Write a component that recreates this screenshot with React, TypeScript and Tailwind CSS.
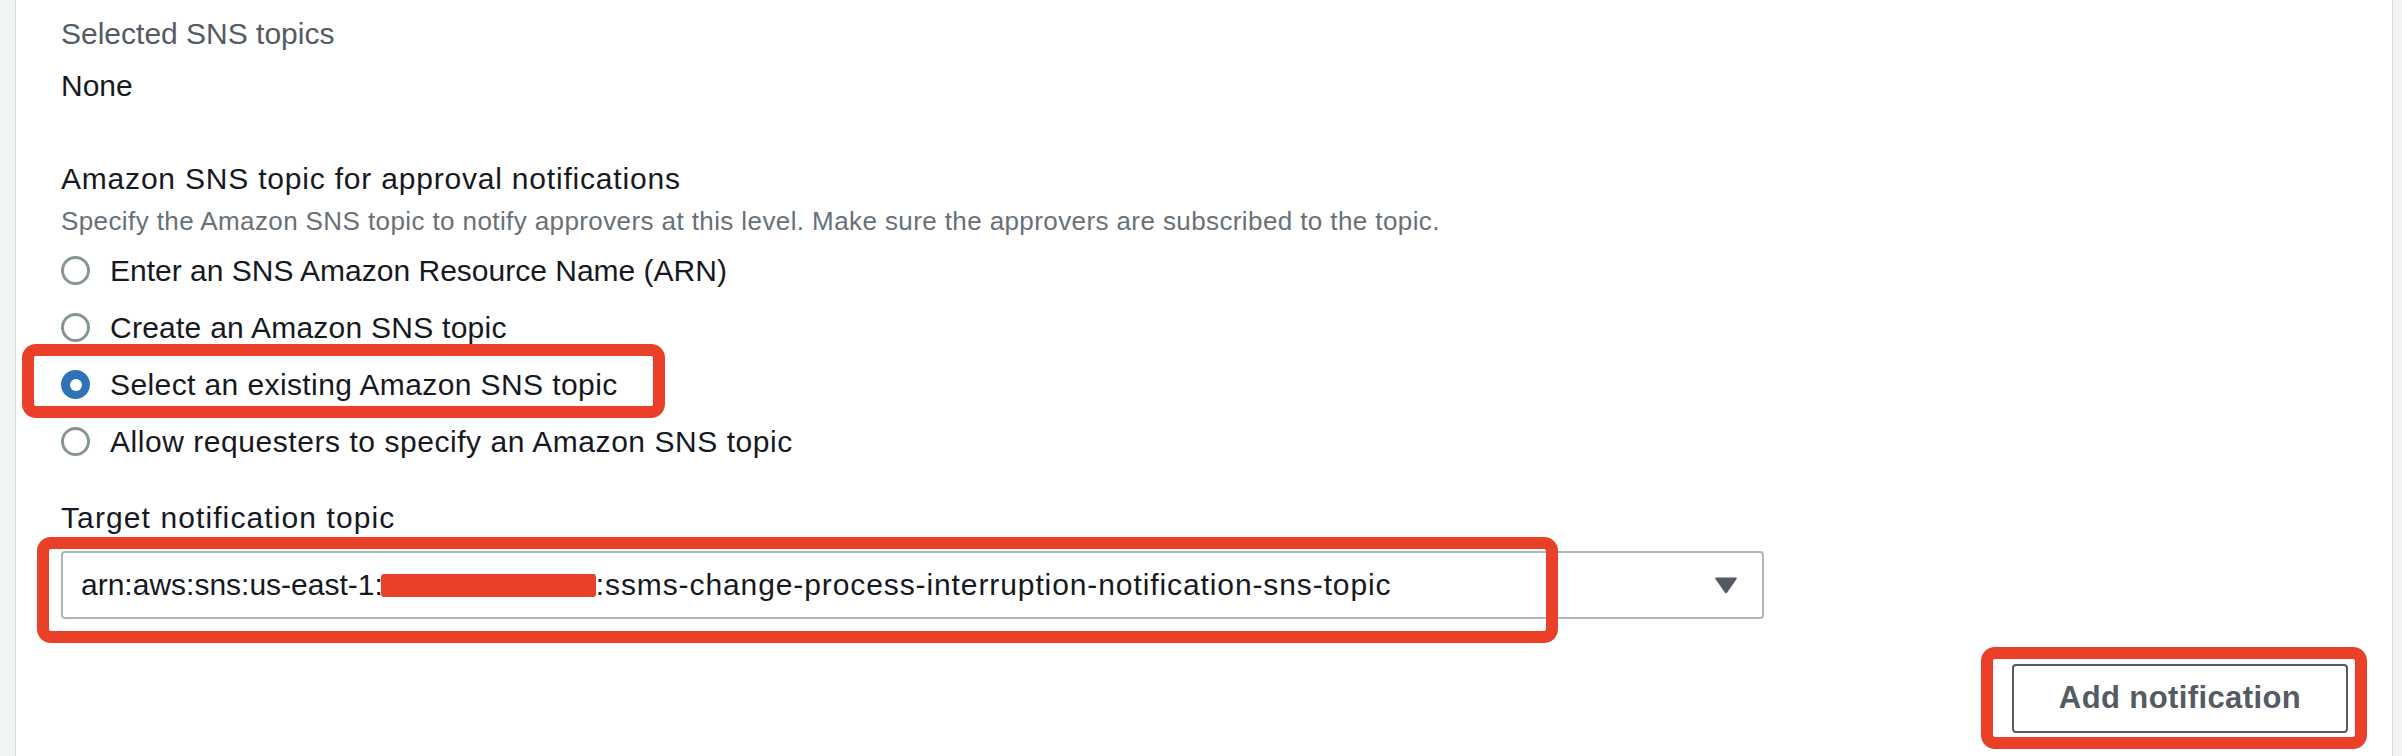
import { ReactNode } from 'react';

// label + tracking tweak so the Liberation widths line up with the original font
const options = [
  { label: 'Enter an SNS Amazon Resource Name (ARN)', track: 'tracking-[0px]' },
  { label: 'Create an Amazon SNS topic', track: 'tracking-[0.25px]' },
  { label: 'Select an existing Amazon SNS topic', track: 'tracking-[0.4px]' },
  { label: 'Allow requesters to specify an Amazon SNS topic', track: 'tracking-[0.55px]' },
];

function Highlight({ className }: { className: string }) {
  return (
    <span
      className={`pointer-events-none absolute rounded-[14px] border-[12px] border-[#ea4029] ${className}`}
    />
  );
}

function Radio({ checked }: { checked: boolean }) {
  if (checked) {
    return (
      <span className="flex h-[29px] w-[29px] shrink-0 items-center justify-center rounded-full bg-[#2e73b8]">
        <span className="h-[12px] w-[12px] rounded-full bg-white" />
      </span>
    );
  }
  return <span className="h-[29px] w-[29px] shrink-0 rounded-full border-[3px] border-[#879596] bg-white" />;
}

function Row({
  label,
  track,
  checked,
  children,
}: {
  label: string;
  track: string;
  checked: boolean;
  children?: ReactNode;
}) {
  return (
    <div className="relative flex h-[57px] items-center gap-[20px]">
      <Radio checked={checked} />
      <span className={`text-[30px] leading-[40px] text-[#16191f] ${track}`}>{label}</span>
      {children}
    </div>
  );
}

export default function App() {
  const selected = 2;

  return (
    <div
      className="flex h-[756px] w-full bg-[#f2f3f3]"
      style={{ fontFamily: '"Liberation Sans", Arial, sans-serif' }}
    >
      <div className="ml-[15px] mr-[9px] flex flex-1 flex-col border-x border-[#d5dbdb] bg-white pl-[45px] pr-[44px] pt-[14px]">
        <div className="text-[30px] leading-[40px] text-[#545b64]">Selected SNS topics</div>
        <div className="mt-[12px] text-[30px] leading-[40px] text-[#16191f]">None</div>

        <div className="mt-[53px] text-[30px] leading-[40px] tracking-[0.8px] text-[#16191f]">
          Amazon SNS topic for approval notifications
        </div>
        <div className="mt-[4px] text-[26px] leading-[36px] tracking-[0.4px] text-[#687078]">
          Specify the Amazon SNS topic to notify approvers at this level. Make sure the approvers are
          subscribed to the topic.
        </div>

        <div className="mt-[3px] flex flex-col">
          {options.map((o, i) => (
            <Row key={o.label} label={o.label} track={o.track} checked={i === selected}>
              {i === selected && <Highlight className="left-[-39px] top-[-12px] bottom-[-5px] w-[643px]" />}
            </Row>
          ))}
        </div>

        <div className="mt-[28px] text-[30px] leading-[40px] tracking-[1.1px] text-[#16191f]">
          Target notification topic
        </div>
        <div className="relative mt-[13px] w-[1703px]">
          <div className="flex h-[68px] items-center justify-between rounded-[4px] border-2 border-[#aab7b8] bg-white pl-[18px] pr-[24px]">
            <span className="whitespace-nowrap text-[30px] leading-[40px] text-[#16191f]">
              arn:aws:sns:us-east-1:
              <span className="-ml-[2px] inline-block h-[23px] w-[215px] rounded-[3px] bg-[#ea4029] align-[-2px]" />
              <span className="tracking-[0.9px]">:ssms-change-process-interruption-notification-sns-topic</span>
            </span>
            <svg width="24" height="18" viewBox="0 0 24 18" className="shrink-0">
              <path
                d="M2 1.5 H22 Q23.5 1.5 22.6 3 L13.2 16.5 Q12 18 10.8 16.5 L1.4 3 Q0.5 1.5 2 1.5 Z"
                fill="#545b64"
              />
            </svg>
          </div>
          <Highlight className="left-[-24px] top-[-14px] bottom-[-24px] w-[1521px]" />
        </div>

        <div className="mt-[45px] flex justify-end">
          <div className="relative">
            <button
              type="button"
              className="flex h-[69px] w-[336px] items-center justify-center rounded-[4px] border-2 border-[#545b64] bg-white text-[31px] font-bold tracking-[0.4px] text-[#545b64]"
            >
              Add notification
            </button>
            <Highlight className="left-[-31px] right-[-19px] top-[-17px] bottom-[-16px]" />
          </div>
        </div>
      </div>
    </div>
  );
}
